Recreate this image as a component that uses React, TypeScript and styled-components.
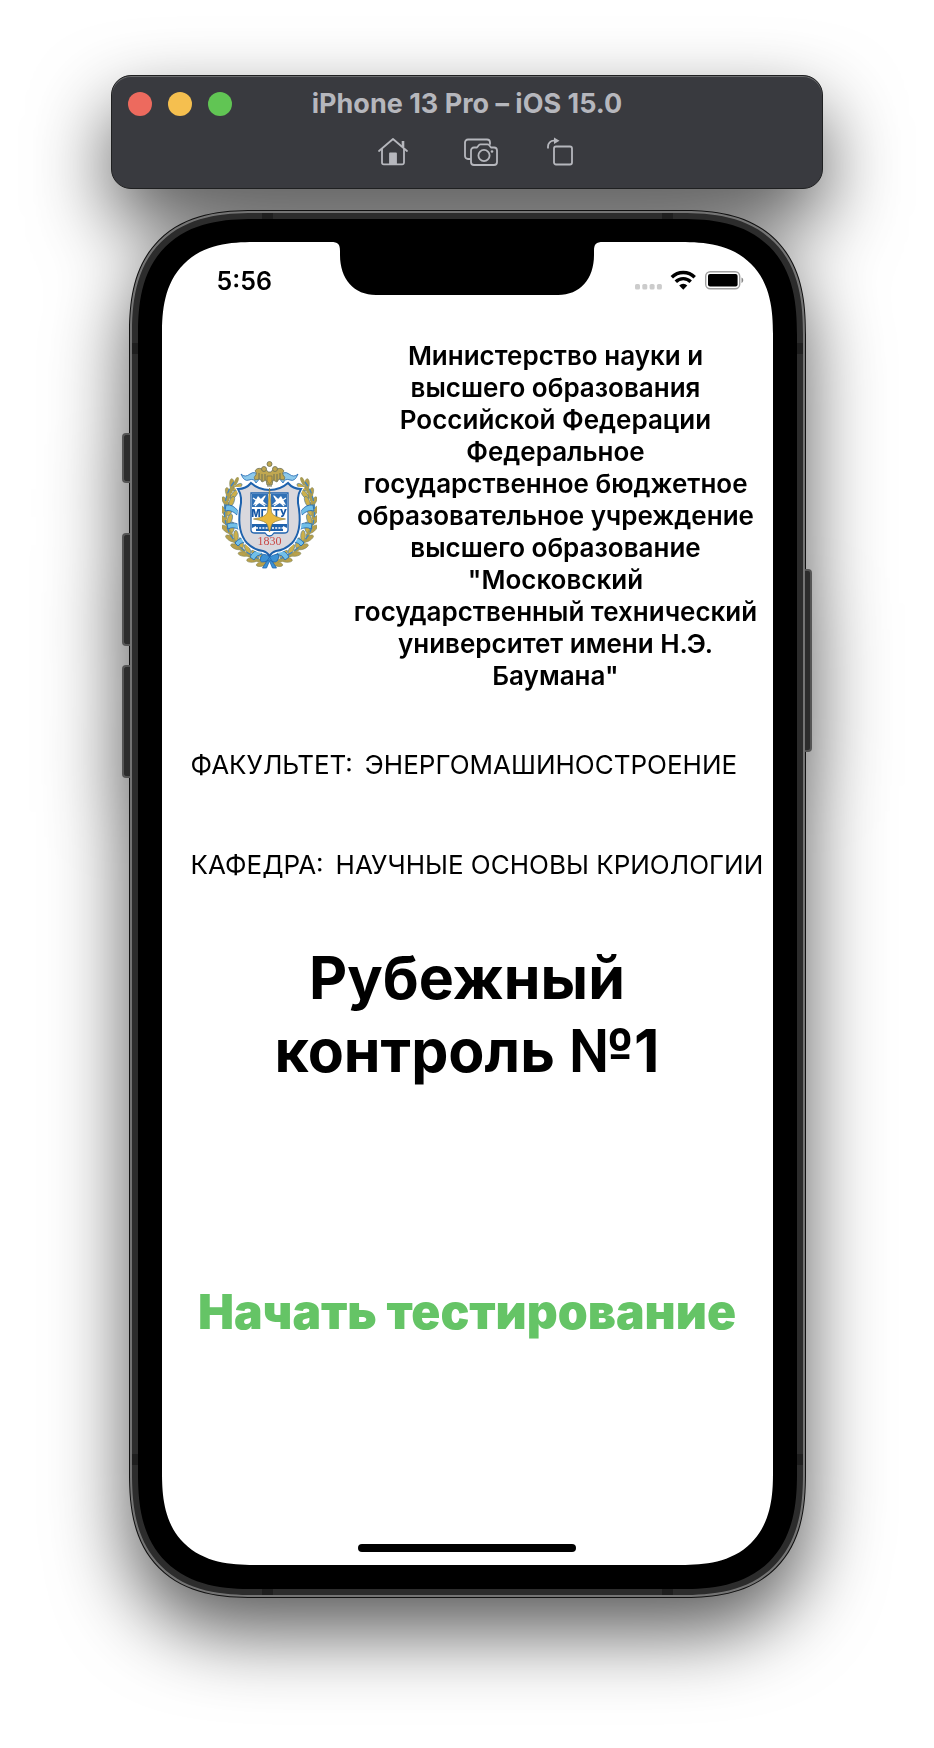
import React from "react";
import styled, { createGlobalStyle, css } from "styled-components";

const GlobalStyle = createGlobalStyle`
  *, *::before, *::after { box-sizing: border-box; }
  body {
    margin: 0;
    background: #ffffff;
    color: #000000;
    font-family: Inter, "Liberation Sans", sans-serif;
    -webkit-font-smoothing: antialiased;
  }
`;

/* Continuous corner: a superellipse where the browser has it, a plain arc elsewhere. */
const corner = (arc: number, smooth: number) => css`
  border-radius: ${arc}px;
  @supports (corner-shape: superellipse(1.35)) {
    border-radius: ${smooth}px;
    corner-shape: superellipse(1.35);
  }
`;

const Desktop = styled.div`
  display: flex;
  flex-direction: column;
  align-items: center;
  gap: 21px;
  padding: 75px 16px 150px;
  filter: drop-shadow(0 34px 39px rgba(0, 0, 0, 0.65));
`;

const Toolbar = styled.header`
  width: 100%;
  max-width: 712px;
  min-height: 114px;
  padding: 16px;
  border: 1px solid #1f2021;
  border-radius: 20px;
  background: #393a3f;
  box-shadow: inset 0 1px 0 #6c6d6f;
`;

const TitleRow = styled.div`
  display: grid;
  grid-template-columns: 104px 1fr 104px;
  align-items: center;
  height: 24px;
`;

const WindowButtons = styled.div`
  display: flex;
  gap: 16px;
`;

const WindowButton = styled.button<{ $color: string }>`
  width: 24px;
  height: 24px;
  padding: 0;
  border: 0;
  border-radius: 50%;
  background: ${(p) => p.$color};
`;

const WindowTitle = styled.h1`
  margin: 0;
  color: #b6b7bd;
  font-size: 27px;
  line-height: 24px;
  font-weight: 700;
  text-align: center;
`;

const ToolRow = styled.div`
  display: flex;
  justify-content: center;
  gap: 48px;
  margin-top: 21px;
  padding-left: 18px;
`;

const ToolButton = styled.button`
  display: flex;
  padding: 0;
  border: 0;
  background: none;
  color: #b6b7bd;
`;

const Phone = styled.div`
  position: relative;
  width: 100%;
  max-width: 677px;
  padding: 1px;
  ${corner(108, 125)}
  background: #111111;
`;

const SteelEdge = styled.div`
  padding: 2px;
  ${corner(107, 124)}
  background: #747474;
`;

const Frame = styled.div`
  position: relative;
  padding: 6px;
  ${corner(105, 122)}
  background: #2c2c2c;
`;

const Bezel = styled.div`
  padding: 23px 24px 24px;
  ${corner(99, 116)}
  background: #000000;
`;

const SideKey = styled.span<{ $side: "left" | "right"; $top: number; $length: number }>`
  position: absolute;
  ${(p) => (p.$side === "left" ? "left: -7px" : "right: -6px")};
  top: ${(p) => p.$top}px;
  width: ${(p) => (p.$side === "left" ? 8 : 7)}px;
  height: ${(p) => p.$length}px;
  border: 2px solid #555555;
  border-${(p) => (p.$side === "left" ? "right" : "left")}: 0;
  border-radius: ${(p) => (p.$side === "left" ? "4px 0 0 4px" : "0 4px 4px 0")};
  background: #2c2c2c;
`;

const Antenna = styled.span<{ $edge: "top" | "bottom" | "left" | "right"; $near: "start" | "end" }>`
  position: absolute;
  background: #1e1e1e;
  ${(p) => p.$edge}: 0;
  ${(p) =>
    p.$edge === "top" || p.$edge === "bottom"
      ? `width: 11px; height: 6px; ${p.$near === "start" ? "left" : "right"}: 130px;`
      : `width: 6px; height: 11px; ${p.$near === "start" ? "top" : "bottom"}: 130px;`}
`;

const Screen = styled.main`
  display: flex;
  flex-direction: column;
  ${corner(76, 92)}
  background: #ffffff;
`;

const StatusBar = styled.div`
  display: grid;
  grid-template-columns: 1fr 272px 1fr;
  height: 98px;
`;

const Clock = styled.time`
  padding: 25px 0 0 55px;
  font-size: 25px;
  line-height: 28px;
  font-weight: 600;
`;

const Indicators = styled.div`
  display: flex;
  justify-content: flex-end;
  align-items: flex-start;
  padding: 28px 29px 0 0;
`;

const University = styled.section`
  display: grid;
  grid-template-columns: 95px 1fr;
  gap: 34px;
  align-items: center;
  padding: 0 12px 0 60px;
`;

const Ministry = styled.p`
  margin: 0;
  font-size: 26px;
  line-height: 32px;
  font-weight: 600;
  text-align: center;
  white-space: pre-line;
`;

const Details = styled.dl`
  display: flex;
  flex-direction: column;
  gap: 68px;
  margin: 57px 0 0;
  padding: 0 16px 0 29px;
`;

const Detail = styled.div`
  display: flex;
  gap: 12px;
  font-size: 26px;
  line-height: 32px;
  white-space: nowrap;
  dd { margin: 0; }
`;

const Heading = styled.h2`
  margin: 60px 0 0;
  font-size: 59px;
  line-height: 73px;
  font-weight: 700;
  text-align: center;
`;

const StartButton = styled.button`
  align-self: center;
  margin: 197px 0 0;
  padding: 0;
  border: 0;
  background: none;
  color: #65c466;
  font-family: inherit;
  font-size: 48px;
  line-height: 56px;
  font-weight: 900;
  white-space: nowrap;
`;

const HomeIndicator = styled.div`
  align-self: center;
  width: 218px;
  height: 8px;
  margin: 204px 0 13px;
  border-radius: 4px;
  background: #000000;
`;

const HomeIcon = () => (
  <svg width="38" height="30" viewBox="0 0 38 30" fill="none" stroke="currentColor" strokeWidth="1.8" strokeLinecap="round" strokeLinejoin="round">
    <path d="M2 14 16 2l14 12" />
    <path d="M5 12v13.500a1.800 1.800 0 0 0 1.800 1.800h18.400a1.800 1.800 0 0 0 1.800-1.800V12" />
    <path d="M26 10V4" strokeWidth="2.600" strokeLinecap="butt" />
    <path d="M13 16.500h6V27h-6z" fill="currentColor" />
  </svg>
);

const CameraIcon = () => (
  <svg width="36" height="30" viewBox="0 0 36 30" fill="none" stroke="currentColor" strokeWidth="1.800" strokeLinejoin="round" strokeLinecap="round">
    <path d="M7 22H5a3 3 0 0 1-3-3V5.500a3 3 0 0 1 3-3h19a3 3 0 0 1 3 3V7" />
    <path d="M11 10.500h3l2-2.500a2 2 0 0 1 1.500-.700h7a2 2 0 0 1 1.500.700l2 2.500H31a3 3 0 0 1 3 3V25a3 3 0 0 1-3 3H11a3 3 0 0 1-3-3V13.500a3 3 0 0 1 3-3z" />
    <circle cx="21" cy="18.500" r="5.600" />
    <circle cx="29" cy="14.500" r="1.300" fill="currentColor" stroke="none" />
  </svg>
);

const RotateIcon = () => (
  <svg width="28" height="30" viewBox="0 0 28 30" fill="none" stroke="currentColor" strokeWidth="1.800">
    <rect x="7" y="9.500" width="18" height="18" rx="2" />
    <path d="M1 11.500V9.500a5.800 5.800 0 0 1 5.800-5.800H8" />
    <path d="M7 .500 12.500 3.700 7 7z" fill="currentColor" stroke="none" />
  </svg>
);

const Notch = () => (
  <svg width="272" height="53" viewBox="0 0 272 53" aria-hidden="true">
    <path d="M0 0H272C265 0 263 2 263 9V13C263 37 249 53 227 53H45C23 53 9 37 9 13V9C9 2 7 0 0 0Z" />
  </svg>
);

const StatusIcons = () => (
  <svg width="110" height="22" viewBox="0 0 110 22" aria-hidden="true">
    {[0, 7.3, 14.6, 21.9].map((x) => (
      <rect key={x} x={x + 1} y="14" width="5" height="5.500" rx="1.600" fill="#cccccc" />
    ))}
    <g fill="none" stroke="#000000" strokeWidth="3.400">
      <path d="M37.800 7.300a16 16 0 0 1 22.900 0" />
      <path d="M41.800 11.800a10.400 10.400 0 0 1 14.900 0" />
    </g>
    <path d="M45.200 15.400a5.700 5.700 0 0 1 8.100 0L49.250 19.700z" />
    <rect x="71.700" y="1.700" width="34" height="17" rx="4.500" fill="none" stroke="#a0a0a0" strokeWidth="1.400" />
    <rect x="74" y="4" width="29.600" height="12.500" rx="2" />
    <path d="M107.500 7.500c2.300.8 2.300 4.600 0 5.400z" fill="#888888" />
  </svg>
);

const LEAVES = [
  [13, 24, -65], [9, 32, -80], [6, 40, -95], [4, 49, -95], [4, 58, -100], [6, 67, -110],
  [10, 76, -120], [15, 84, -130], [22, 91, -145], [30, 97, -155], [39, 101, -165],
];

const Laurel = () => (
  <g>
    {LEAVES.map(([x, y, angle], i) => (
      <g key={i} transform={`translate(${x} ${y}) rotate(${angle + 90})`}>
        <ellipse cx="-3" cy="0" rx="2.300" ry="5.500" fill="#b9a04a" stroke="#7f8459" strokeWidth=".6" transform="rotate(-28)" />
        <ellipse cx="4" cy="0" rx="2.300" ry="5.500" fill="#cdb04a" stroke="#4b7590" strokeWidth=".6" transform="rotate(28)" />
        <ellipse cx="0" cy="-3" rx="1.800" ry="4.500" fill="#a99c52" />
      </g>
    ))}
    <path d="M12 22C2 34 1 52 4 64S17 88 26 93s14 8 20 9" fill="none" stroke="#3c83c4" strokeWidth="1.200" strokeDasharray="5 3" />
    <g fill="#71bfe8" stroke="#1e66b0" strokeWidth=".8">
      <path d="M4 45q7-1 12 6l-1 4q-6-6-12-4z" />
      <path d="M5 64q8-3 14 2l-1 4q-7-4-12-1z" />
      <path d="M13 83q5-7 13-4l-1 4q-5-2-9 3z" />
      <path d="M28 97q3-7 11-7l1 4q-6 1-8 6z" />
    </g>
  </g>
);

const UniversityEmblem = () => (
  <svg width="95" height="112" viewBox="0 0 95 112" role="img" aria-label="МГТУ 1830">
    <Laurel />
    <g transform="translate(95 0) scale(-1 1)"><Laurel /></g>
    <g fill="#8dc9eb" stroke="#2469b2" strokeWidth=".8">
      <path d="M39 17q-6-7-11-3t-9 0q3 8 8 6t7 3z" />
      <path d="M56 17q6-7 11-3t9 0q-3 8-8 6t-7 3z" />
    </g>
    <path d="M16 29q8 0 13-6 8 7 18.500 7T66 23q5 6 13 6-5 8-2 20 3 23-7 34-7 7-16 8-4 1-6.500 5-2.500-4-6.500-5-9-1-16-8-10-11-7-34 3-12-2-20z" fill="#d9d8dd" stroke="#ffffff" strokeWidth="4" />
    <path d="M16 29q8 0 13-6 8 7 18.500 7T66 23q5 6 13 6-5 8-2 20 3 23-7 34-7 7-16 8-4 1-6.500 5-2.500-4-6.500-5-9-1-16-8-10-11-7-34 3-12-2-20z" fill="#d9d8dd" stroke="#1e62ad" strokeWidth="2" />
    <path d="M29 33h37v37q0 3-4 3H52q-2 3-4.500 3T43 73H33q-4 0-4-3z" fill="#ffffff" stroke="#1e62ad" strokeWidth="1.300" />
    <path d="M30 34h16v13H30zM49 34h16v13H49z" fill="#2f70b5" />
    <path d="M31 45l5-9 3 3 5-4-3 6 4 4-7-2zM64 45l-5-9-3 3-5-4 3 6-4 4 7-2z" fill="#ffffff" />
    <path d="M31 38l12 8M43 36 33 46M64 38l-12 8M52 36l10 10" stroke="#ffffff" strokeWidth="1.300" />
    <path d="M30 64h35v4l-4-2v5H34v-5l-4 2z" fill="#1e62ad" />
    <path d="M34 68h27" stroke="#ffffff" strokeWidth="1.300" strokeDasharray="2 1.200" />
    <text x="37" y="57" textAnchor="middle" fill="#1557a5" fontSize="10" fontWeight="800">МГ</text>
    <text x="58" y="57" textAnchor="middle" fill="#1557a5" fontSize="10" fontWeight="800">ТУ</text>
    <path d="M47.500 28 49.500 52q1 5 14 7-13 2-14 6l-2 7-2-7q-1-4-14-6 13-2 14-7z" fill="#e8b93e" stroke="#8f8146" strokeWidth=".7" />
    <g fill="#c0a750" stroke="#6d7157" strokeWidth=".8">
      <path d="M46 12q-3-5-6-3-5-2-7 2 2 1 1 4-3 2-1 5l5-1 2 3 4-2 1 5h5l1-5 4 2 2-3 5 1q2-3-1-5-1-3 1-4-2-4-7-2-3-2-6 3z" />
      <circle cx="42" cy="9" r="2.500" /><circle cx="53" cy="9" r="2.500" />
      <circle cx="47.500" cy="4" r="2.500" />
    </g>
    <path d="M37 13v6M40 14v7M43 14v6M52 14v6M55 14v7M58 13v6M45 26h5" stroke="#6d7157" strokeWidth="1" />
    <path d="M45 16h5v5q-1 2-2.500 3-1.500-1-2.500-3z" fill="#caa43b" stroke="#6d7157" strokeWidth=".7" />
    <path d="M47.500 97q-7-6-9 1t9 2q7 5 9-2t-9-1l-7 11h4l3-7 3 7h4z" fill="#3c91d4" stroke="#1e66b0" strokeWidth=".8" />
    <text x="47.500" y="85" textAnchor="middle" fill="#c94845" fontFamily="Liberation Serif, serif" fontSize="12">1830</text>
  </svg>
);

const MINISTRY_TEXT = `Министерство науки и
высшего образования
Российской Федерации
Федеральное
государственное бюджетное
образовательное учреждение
высшего образование
"Московский
государственный технический
университет имени Н.Э.
Баумана"`;

const DETAILS = [
  ["ФАКУЛЬТЕТ:", "ЭНЕРГОМАШИНОСТРОЕНИЕ"],
  ["КАФЕДРА:", "НАУЧНЫЕ ОСНОВЫ КРИОЛОГИИ"],
];

export default function App() {
  return (
    <>
      <GlobalStyle />
      <Desktop>
        <Toolbar>
          <TitleRow>
            <WindowButtons>
              <WindowButton $color="#ed6a5e" aria-label="Close" />
              <WindowButton $color="#f5bf4f" aria-label="Minimize" />
              <WindowButton $color="#61c554" aria-label="Zoom" />
            </WindowButtons>
            <WindowTitle>iPhone 13 Pro – iOS 15.0</WindowTitle>
          </TitleRow>
          <ToolRow>
            <ToolButton aria-label="Home"><HomeIcon /></ToolButton>
            <ToolButton aria-label="Screenshot"><CameraIcon /></ToolButton>
            <ToolButton aria-label="Rotate"><RotateIcon /></ToolButton>
          </ToolRow>
        </Toolbar>
        <Phone>
          <SideKey $side="left" $top={223} $length={50} />
          <SideKey $side="left" $top={323} $length={113} />
          <SideKey $side="left" $top={455} $length={113} />
          <SideKey $side="right" $top={359} $length={183} />
          <SteelEdge>
            <Frame>
              <Antenna $edge="top" $near="start" />
              <Antenna $edge="top" $near="end" />
              <Antenna $edge="bottom" $near="start" />
              <Antenna $edge="bottom" $near="end" />
              <Antenna $edge="left" $near="start" />
              <Antenna $edge="left" $near="end" />
              <Antenna $edge="right" $near="start" />
              <Antenna $edge="right" $near="end" />
              <Bezel>
                <Screen>
                  <StatusBar>
                    <Clock>5:56</Clock>
                    <Notch />
                    <Indicators><StatusIcons /></Indicators>
                  </StatusBar>
                  <University>
                    <UniversityEmblem />
                    <Ministry>{MINISTRY_TEXT}</Ministry>
                  </University>
                  <Details>
                    {DETAILS.map(([label, value]) => (
                      <Detail key={label}>
                        <dt>{label}</dt>
                        <dd>{value}</dd>
                      </Detail>
                    ))}
                  </Details>
                  <Heading>Рубежный<br />контроль №1</Heading>
                  <StartButton>Начать тестирование</StartButton>
                  <HomeIndicator />
                </Screen>
              </Bezel>
            </Frame>
          </SteelEdge>
        </Phone>
      </Desktop>
    </>
  );
}
